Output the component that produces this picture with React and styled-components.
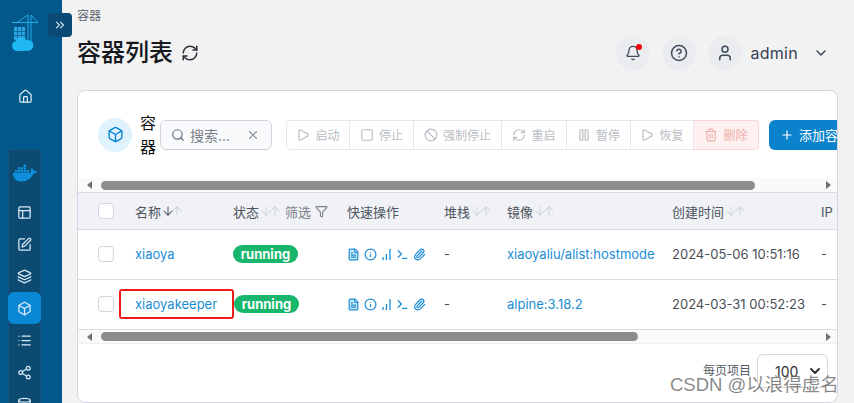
import React from 'react'
import styled, { createGlobalStyle } from 'styled-components'
import {
  Home, PanelsTopLeft, SquarePen, Layers, Box, List, Share2, Database, ChevronsRight,
  RefreshCw, Bell, CircleHelp, User, ChevronDown, Search, X, Play, Square, Ban, Pause,
  Trash2, Plus, Filter, ArrowDown, ArrowUp, Info, Terminal, Paperclip, FileText,
} from 'lucide-react'
import { FaDocker } from 'react-icons/fa'

const GlobalStyle = createGlobalStyle`
  html, body { margin: 0; padding: 0; height: 403px; overflow: hidden; background: #f2f2f3; }
  * { box-sizing: border-box; }
  body { font-family: Inter, "Noto Sans CJK SC", sans-serif; }
`

const Page = styled.div`
  display: flex;
  width: 854px;
  height: 403px;
  position: relative;
  overflow: hidden;
`
const Sidebar = styled.aside`
  width: 62px;
  flex: none;
  background: #03588b;
  display: flex;
  flex-direction: column;
  align-items: center;
  padding-top: 14px;
  position: relative;
`
const LogoWrap = styled.div`
  flex: none;
  height: 38px;
  margin-left: -12px;
`
const Expander = styled.div`
  position: absolute;
  left: 48px;
  top: 13px;
  width: 24px;
  height: 24px;
  border-radius: 4px;
  background: #0a4a74;
  color: #d5e6f2;
  display: flex;
  align-items: center;
  justify-content: center;
`
const HomeLink = styled.div`
  flex: none;
  color: #dcebf5;
  margin-top: 36px;
  margin-left: -12px;
  height: 16px;
`
const EnvPanel = styled.div`
  width: 33px;
  margin: 45px 0 0 -13px;
  flex: none;
  height: 300px;
  background: #0c4a72;
  border: 1px dotted #1a5c87;
  border-bottom: 0;
  border-radius: 3px 3px 0 0;
  display: flex;
  flex-direction: column;
  align-items: center;
  padding-top: 11px;
`
const Whale = styled.div`
  flex: none;
  color: #0f8fdb;
  height: 25px;
  margin-bottom: 10px;
`
const NavItem = styled.div`
  flex: none;
  width: 33px;
  height: 32px;
  border-radius: 6px;
  display: flex;
  align-items: center;
  justify-content: center;
  color: #dcebf5;
  background: ${p => (p.$active ? '#0a87d4' : 'transparent')};
`
const Main = styled.main`
  flex: 1;
  min-width: 0;
  padding: 0 16px 0 15px;
  display: flex;
  flex-direction: column;
`
const Topbar = styled.header`
  height: 90px;
  flex: none;
  display: flex;
  justify-content: space-between;
  align-items: flex-start;
`
const TitleBlock = styled.div`
  padding-top: 8px;
`
const Crumb = styled.div`
  font-size: 12px;
  line-height: 16px;
  color: #5c6470;
`
const TitleRow = styled.div`
  display: flex;
  align-items: center;
  gap: 8px;
  margin-top: 10px;
  color: #2b3138;
`
const Title = styled.h1`
  margin: 0;
  font-size: 24px;
  line-height: 38px;
  font-weight: 500;
  color: #16191d;
`
const UserArea = styled.div`
  display: flex;
  align-items: center;
  gap: 12px;
  padding-top: 36px;
  margin-right: 9px;
`
const RoundBtn = styled.div`
  position: relative;
  width: 34px;
  height: 34px;
  border-radius: 50%;
  background: #eaecf0;
  color: #3f4b5c;
  display: flex;
  align-items: center;
  justify-content: center;
`
const RedDot = styled.span`
  position: absolute;
  right: 8px;
  top: 8px;
  width: 6px;
  height: 6px;
  border-radius: 50%;
  background: #f5000f;
`
const UserBlock = styled.div`
  display: flex;
  align-items: center;
  color: #344054;
  font-size: 16px;
  letter-spacing: 0.3px;
  gap: 15px;
  margin-left: -4px;
`
const Card = styled.section`
  flex: 1;
  background: #fff;
  border: 1px solid #d4d4e3;
  border-radius: 8px;
  overflow: hidden;
  display: flex;
  flex-direction: column;
  min-width: 0;
`
const CardHead = styled.div`
  height: 87px;
  flex: none;
  display: flex;
  align-items: center;
  padding-left: 20px;
  white-space: nowrap;
`
const CircleIcon = styled.div`
  width: 34px;
  height: 34px;
  flex: none;
  border-radius: 50%;
  background: #e0f2fe;
  color: #0a87d4;
  display: flex;
  align-items: center;
  justify-content: center;
  margin-right: 8px;
`
const CardTitle = styled.div`
  width: 16px;
  flex: none;
  font-size: 16px;
  line-height: 24px;
  white-space: normal;
  color: #111;
  margin-right: 4px;
`
const SearchBox = styled.div`
  width: 112px;
  height: 30px;
  flex: none;
  border: 1px solid #cfd2da;
  border-radius: 6px;
  background: #f9fafb;
  display: flex;
  align-items: center;
  padding: 0 11px 0 10px;
  color: #667085;
  font-size: 14px;
`
const SearchText = styled.span`
  flex: 1;
  margin-left: 5px;
  color: #7b7f87;
`
const ClearIcon = styled.span`
  display: flex;
  color: #8a8f98;
`
const BtnGroup = styled.div`
  display: flex;
  margin-left: 14px;
  flex: none;
`
const ActionBtn = styled.div`
  width: ${p => p.$w}px;
  height: 30px;
  display: flex;
  align-items: center;
  justify-content: center;
  gap: 5px;
  font-size: 12px;
  color: ${p => (p.$danger ? '#eeb0aa' : '#b9bcc3')};
  background: ${p => (p.$danger ? '#fef1f0' : '#fff')};
  border: 1px solid ${p => (p.$danger ? '#fbd8d5' : '#e6e7ec')};
  border-left-width: ${p => (p.$first ? '1px' : '0')};
  border-radius: ${p => (p.$first ? '4px 0 0 4px' : p.$danger ? '0 4px 4px 0' : '0')};
`
const AddBtn = styled.div`
  flex: none;
  width: 110px;
  height: 30px;
  margin-left: 10px;
  background: #0a83cc;
  color: #fff;
  border-radius: 6px;
  font-size: 13px;
  display: flex;
  align-items: center;
  gap: 5px;
  padding-left: 11px;
`
const ScrollTrack = styled.div`
  height: 14px;
  flex: none;
  background: #fafafa;
  display: flex;
  align-items: center;
  justify-content: space-between;
  padding: 0 6px 0 9px;
  border-bottom: ${p => (p.$line ? '1px solid #f0f0f0' : '0')};
`
const Arrow = styled.span`
  width: 0;
  height: 0;
  border-top: 4px solid transparent;
  border-bottom: 4px solid transparent;
  ${p => (p.$right ? 'border-left: 5px solid #6f6f6f;' : 'border-right: 5px solid #6f6f6f;')}
`
const ThumbArea = styled.div`
  flex: 1;
  padding-left: 9px;
`
const Thumb = styled.div`
  height: 9px;
  border-radius: 5px;
  background: #8c8c8c;
`
const COLS = '57px 98px 114px 97px 63px 165px 149px 60px'
const HeadRow = styled.div`
  display: grid;
  grid-template-columns: ${COLS};
  height: 38px;
  flex: none;
  align-items: center;
  background: #f1f2f6;
  border-top: 1px solid #dcdde3;
  border-bottom: 1px solid #dcdde3;
  font-size: 13px;
  color: #4e5560;
  white-space: nowrap;
`
const Row = styled.div`
  display: grid;
  grid-template-columns: ${COLS};
  height: 50px;
  flex: none;
  align-items: center;
  padding-bottom: 1px;
  border-bottom: 1px solid #dcdde3;
  font-size: 13px;
  color: #4a4f57;
  white-space: nowrap;
  &:last-of-type { border-bottom: 0; }
`
const CheckCell = styled.div`
  padding-left: 20px;
`
const Checkbox = styled.div`
  width: 16px;
  height: 16px;
  border: 1px solid #cfd4e0;
  border-radius: 4px;
  background: #fff;
`
const HeadCell = styled.div`
  display: flex;
  align-items: center;
`
const SortPair = styled.span`
  display: inline-flex;
  color: #cfd3da;
`
const FilterLabel = styled.span`
  display: inline-flex;
  align-items: center;
  gap: 4px;
  margin-left: 3px;
  color: #7a808a;
`
const NameCell = styled.div`
  position: relative;
`
const StatusCell = styled.div`
  display: flex;
`
const Link = styled.span`
  color: #1b8dd4;
`
const Highlight = styled.div`
  position: absolute;
  left: -16px;
  top: -7px;
  width: 115px;
  height: 30px;
  border: 2.5px solid #ee1c1c;
  border-radius: 3px;
  pointer-events: none;
`
const Badge = styled.span`
  width: 65px;
  height: 18px;
  margin-left: ${p => (p.$shift ? '1px' : '0')};
  border-radius: 9px;
  background: #17b66c;
  color: #fff;
  font-size: 13px;
  line-height: 18px;
  font-weight: 700;
  text-align: center;
`
const QuickIcons = styled.div`
  display: flex;
  align-items: center;
  gap: 4px;
  color: #1b8dd4;
`
const Footer = styled.div`
  flex: 1;
  display: flex;
  justify-content: flex-end;
  align-items: flex-start;
  gap: 6px;
  padding: 10px 9px 0 0;
  font-size: 12px;
  color: #555b64;
`
const PerPage = styled.span`
  line-height: 34px;
`
const SelectBox = styled.div`
  width: 71px;
  height: 34px;
  border: 1px solid #d7d7d7;
  border-radius: 6px;
  background: #fff;
  display: flex;
  align-items: center;
  justify-content: space-between;
  padding: 0 4px 0 17px;
  font-size: 14px;
  color: #333;
`
const Watermark = styled.div`
  position: absolute;
  left: 670px;
  top: 374px;
  font-family: "Liberation Sans", "Noto Sans CJK SC", sans-serif;
  font-size: 18.5px;
  line-height: 21px;
  color: rgba(90, 90, 90, 0.72);
  white-space: nowrap;
`

// crane + containers + cloud, the app logo
const Logo = () => (
  <svg width="28" height="38" viewBox="0 0 28 38" fill="none">
    <g stroke="#27b4f2" strokeWidth="0.9">
      <path d="M1 8.500H27M17 1v27M20 1v27M17 1L6 8.500M20 1l7 7.500" />
    </g>
    <path d="M3 13h11v13H3z" fill="#2aa5dd" />
    <path d="M3 17.500h11M3 21.500h11M6.500 13v13M10.500 13v13" stroke="#075a8d" strokeWidth="0.7" />
    <path d="M6 37a5 5 0 0 1-1.500-9.700 6 6 0 0 1 11-1 5.300 5.300 0 0 1 3 10.300c-1 .4-12 .4-12.500 .4z" fill="#1fb8f5" />
  </svg>
)

const Sort = ({ active }) => (
  <SortPair>
    <ArrowDown size={14} strokeWidth={1.8} color={active ? '#4e5560' : undefined} style={{ marginRight: '-5px' }} />
    <ArrowUp size={14} strokeWidth={1.8} />
  </SortPair>
)

const Signal = () => (
  <svg width="11" height="13" viewBox="0 0 11 13" fill="none" stroke="currentColor" strokeWidth="1.3">
    <path d="M2 12V9M5.500 12V6M9 12V1" />
  </svg>
)

const Quick = () => (
  <QuickIcons>
    <FileText size={13} fill="#cfe8f7" strokeWidth={2.2} />
    <Info size={13} strokeWidth={2.2} />
    <Signal />
    <Terminal size={13} strokeWidth={2.2} />
    <Paperclip size={13} strokeWidth={2.2} />
  </QuickIcons>
)

const navItems = [PanelsTopLeft, SquarePen, Layers, Box, List, Share2, Database]
const actions = [
  { label: '启动', w: 64, Icon: Play },
  { label: '停止', w: 64, Icon: Square },
  { label: '强制停止', w: 88, Icon: Ban },
  { label: '重启', w: 65, Icon: RefreshCw },
  { label: '暂停', w: 64, Icon: Pause },
  { label: '恢复', w: 63, Icon: Play },
  { label: '删除', w: 65, Icon: Trash2, danger: true },
]
const rows = [
  { name: 'xiaoya', image: 'xiaoyaliu/alist:hostmode', created: '2024-05-06 10:51:16' },
  { name: 'xiaoyakeeper', image: 'alpine:3.18.2', created: '2024-03-31 00:52:23', marked: true },
]

export default function App() {
  return (
    <Page>
      <GlobalStyle />
      <Sidebar>
        <LogoWrap><Logo /></LogoWrap>
        <Expander><ChevronsRight size={14} /></Expander>
        <HomeLink><Home size={15} /></HomeLink>
        <EnvPanel>
          <Whale><FaDocker size={24} /></Whale>
          {navItems.map((Icon, i) => (
            <NavItem key={i} $active={i === 3}><Icon size={15} /></NavItem>
          ))}
        </EnvPanel>
      </Sidebar>
      <Main>
        <Topbar>
          <TitleBlock>
            <Crumb>容器</Crumb>
            <TitleRow>
              <Title>容器列表</Title>
              <RefreshCw size={18} />
            </TitleRow>
          </TitleBlock>
          <UserArea>
            <RoundBtn><Bell size={16} /><RedDot /></RoundBtn>
            <RoundBtn><CircleHelp size={18} /></RoundBtn>
            <RoundBtn><User size={18} /></RoundBtn>
            <UserBlock>admin <ChevronDown size={16} /></UserBlock>
          </UserArea>
        </Topbar>
        <Card>
          <CardHead>
            <CircleIcon><Box size={17} /></CircleIcon>
            <CardTitle>容器</CardTitle>
            <SearchBox>
              <Search size={14} />
              <SearchText>搜索...</SearchText>
              <ClearIcon><X size={14} /></ClearIcon>
            </SearchBox>
            <BtnGroup>
              {actions.map(({ label, w, Icon, danger }, i) => (
                <ActionBtn key={label} $w={w} $first={i === 0} $danger={danger}>
                  <Icon size={14} />{label}
                </ActionBtn>
              ))}
            </BtnGroup>
            <AddBtn><Plus size={14} />添加容器</AddBtn>
          </CardHead>
          <ScrollTrack>
            <Arrow />
            <ThumbArea><Thumb style={{ width: '654px' }} /></ThumbArea>
            <Arrow $right />
          </ScrollTrack>
          <HeadRow>
            <CheckCell><Checkbox /></CheckCell>
            <HeadCell>名称<Sort active /></HeadCell>
            <HeadCell>状态<Sort /><FilterLabel>筛选 <Filter size={13} /></FilterLabel></HeadCell>
            <HeadCell>快速操作</HeadCell>
            <HeadCell>堆栈<Sort /></HeadCell>
            <HeadCell>镜像<Sort /></HeadCell>
            <HeadCell>创建时间<Sort /></HeadCell>
            <HeadCell>IP 地址</HeadCell>
          </HeadRow>
          {rows.map(r => (
            <Row key={r.name}>
              <CheckCell><Checkbox /></CheckCell>
              <NameCell>
                <Link>{r.name}</Link>
                {r.marked && <Highlight />}
              </NameCell>
              <StatusCell><Badge $shift={r.marked}>running</Badge></StatusCell>
              <Quick />
              <div>-</div>
              <Link>{r.image}</Link>
              <div>{r.created}</div>
              <div>-</div>
            </Row>
          ))}
          <ScrollTrack $line>
            <Arrow />
            <ThumbArea><Thumb style={{ width: '537px' }} /></ThumbArea>
            <Arrow $right />
          </ScrollTrack>
          <Footer>
            <PerPage>每页项目</PerPage>
            <SelectBox>100 <ChevronDown size={16} strokeWidth={3} /></SelectBox>
          </Footer>
        </Card>
      </Main>
      <Watermark>CSDN @以浪得虚名</Watermark>
    </Page>
  )
}
